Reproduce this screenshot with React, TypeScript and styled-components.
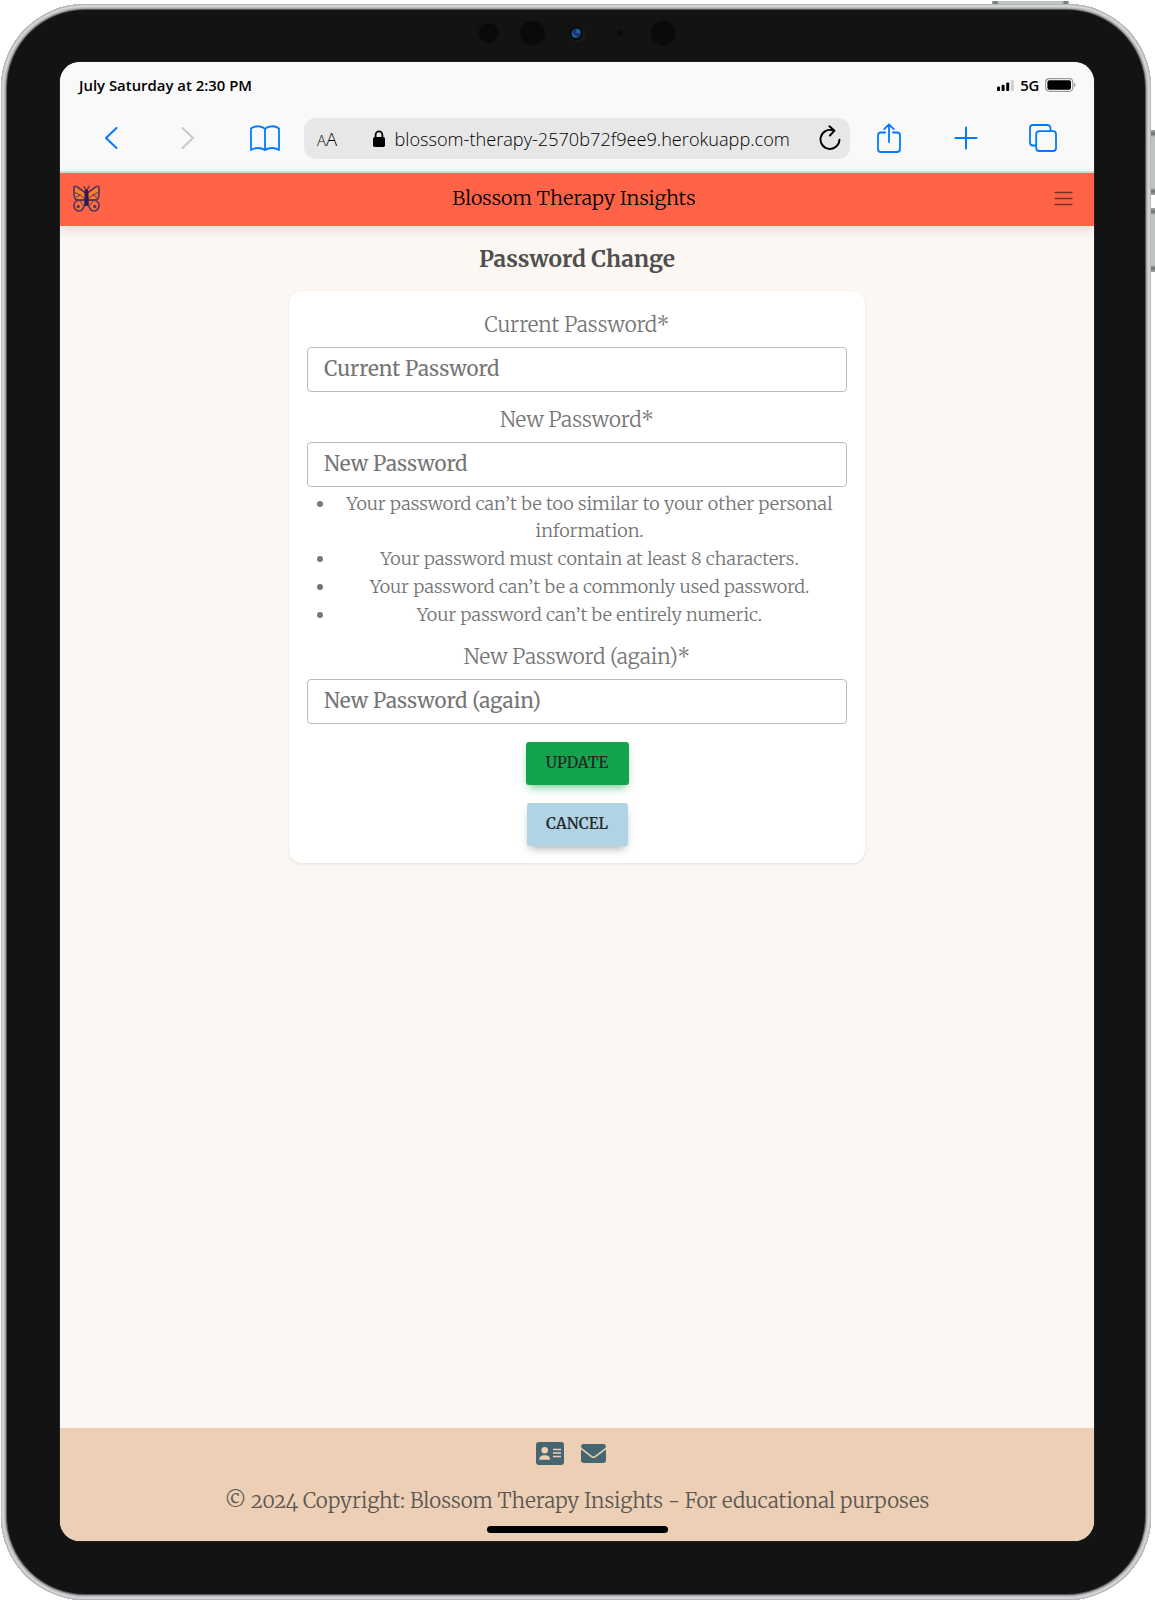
import React from "react";
import styled, { createGlobalStyle } from "styled-components";

const serif = '"Merriweather", "Noto Serif", "DejaVu Serif Condensed", "Liberation Serif", serif';
const sans = '"Open Sans", "Noto Sans", sans-serif';
const blue = "#007aff";

const GlobalStyle = createGlobalStyle`
  * { box-sizing: border-box; }
  body { margin: 0; background: #fff; overflow: hidden; }
`;

const Stage = styled.div`
  position: relative;
  width: 1155px;
  height: 1600px;
  padding: 4px 4px 0 1px;
`;

const HardwareKey = styled.i<{ $x: number; $y: number; $w: number; $h: number; $side?: boolean }>`
  position: absolute;
  left: ${(p) => p.$x}px;
  top: ${(p) => p.$y}px;
  width: ${(p) => p.$w}px;
  height: ${(p) => p.$h}px;
  background: linear-gradient(
    ${(p) => (p.$side ? "180deg" : "90deg")},
    #a4a6a6 0, #6b6e6e 4px, #bfc3c2 7px, #bfc3c2 calc(100% - 7px), #6b6e6e calc(100% - 4px), #a4a6a6 100%
  );
`;

const Frame = styled.div`
  position: relative;
  height: 1596px;
  padding: 6px;
  border-radius: 84px;
  background: #131313;
  box-shadow:
    inset 0 0 0 1px #b5b6b8,
    inset 0 0 0 3px #d3d4d6,
    inset 0 0 0 4px #bcbdc0,
    inset 0 0 0 5px #a3a3a7,
    inset 0 0 0 6px #55565a;
`;

const Bezel = styled.div`
  display: flex;
  flex-direction: column;
  height: 100%;
  padding: 0 51px 53px 53px;
`;

const CameraRow = styled.div`
  flex: 0 0 52px;
  display: flex;
  justify-content: center;
  svg { display: block; }
`;

const Screen = styled.div`
  flex: 1;
  display: flex;
  flex-direction: column;
  width: 1034px;
  border-radius: 20px;
  background: #fcf7f3;
  box-shadow: 0 0 0 1px #1c2222;
  overflow: hidden;
`;

const StatusBar = styled.div`
  display: flex;
  flex: 0 0 47px;
  align-items: center;
  justify-content: space-between;
  padding: 0 18px 1px 19px;
  background: #f9f9f9;
  font: 600 14.9px/20px ${sans};
  color: #000;
`;

const StatusIcons = styled.div`
  display: flex;
  align-items: center;
  gap: 6px;
  letter-spacing: -0.3px;
  svg { display: block; }
`;

const Toolbar = styled.div`
  display: flex;
  flex: 0 0 64px;
  align-items: center;
  padding: 0 12px 4px 12px;
  border-bottom: 2px solid #dcdcdc;
  background: #f9f9f9;
`;

const ToolGroup = styled.div`
  display: grid;
  grid-template-columns: repeat(3, 1fr);
  width: 232px;
`;

const ToolButton = styled.button`
  display: flex;
  align-items: center;
  justify-content: center;
  height: 40px;
  padding: 0;
  border: 0;
  background: none;
`;

const AddressBar = styled.div`
  display: flex;
  align-items: center;
  width: 546px;
  height: 41px;
  padding: 0 9px 0 13px;
  border-radius: 12px;
  background: #e7e7e7;
  font: 300 18.15px/40px ${sans};
  color: #000;
`;

const TextSize = styled.div`
  width: 56px;
  padding-top: 3px;
  font-size: 18.5px;
  small { font-size: 15px; }
`;

const Url = styled.div`
  flex: 1;
  padding: 1px 0 0 9.5px;
  white-space: nowrap;
`;

const NavBar = styled.header`
  position: relative;
  display: grid;
  grid-template-columns: 60px 1fr 60px;
  flex: 0 0 53px;
  align-items: center;
  padding: 0 14px 2px 13px;
  background: #ff6347;
  box-shadow: 0 4px 12px rgba(0, 0, 0, 0.11);
  svg { display: block; }
  svg:last-child { justify-self: end; margin-right: 7px; }
`;

const Brand = styled.div`
  padding: 0 5px 2px 0;
  text-align: center;
  font: 300 19.8px/30px ${serif};
  color: #000;
`;

const Main = styled.main`
  flex: 1;
  display: flex;
  flex-direction: column;
  align-items: center;
`;

const PageTitle = styled.h1`
  margin: 17px 0 16px;
  font: 700 22.6px/32px ${serif};
  color: #4f4f4f;
`;

const Card = styled.form`
  display: flex;
  flex-direction: column;
  align-items: center;
  width: 576px;
  height: 572px;
  padding: 19px 18px 0;
  border-radius: 13px;
  background: #fff;
  box-shadow: 0 1px 3px rgba(0, 0, 0, 0.1);
`;

const Label = styled.label`
  font: 300 20.7px/30px ${serif};
  color: #757575;
`;

const Input = styled.input`
  flex: 0 0 45px;
  width: 540px;
  margin: 7px 0 13px;
  padding: 0 15px 1px 16px;
  border: 1px solid #bdbdbd;
  border-radius: 4px;
  background: #fff;
  font: 400 20.6px/30px ${serif};
  &::placeholder { color: #757575; opacity: 1; }
`;

const Hints = styled.ul`
  align-self: stretch;
  margin: -10px 0 13px;
  padding: 0 0 0 25px;
  font: 300 18.1px/27.3px ${serif};
  color: #757575;
  text-align: center;
  list-style: none;
`;

const Hint = styled.li`
  position: relative;
  padding-bottom: 0.6px;
  &::before {
    content: "";
    position: absolute;
    left: -15px;
    top: 11px;
    width: 6px;
    height: 6px;
    border-radius: 50%;
    background: #757575;
  }
`;

const Button = styled.button<{ $bg: string; $shadow: string; $w: number }>`
  flex: 0 0 43px;
  width: ${(p) => p.$w}px;
  margin: 5px 0 13px;
  padding: 0;
  border: 0;
  border-radius: 3px;
  background: ${(p) => p.$bg};
  box-shadow: 0 5px 9px -3px ${(p) => p.$shadow};
  font: 600 15.2px/20px ${serif};
  color: #262626;
`;

const Footer = styled.footer`
  display: flex;
  flex-direction: column;
  align-items: center;
  flex: 0 0 113px;
  background: #eccfb4;
`;

const FooterIcons = styled.div`
  display: flex;
  align-items: center;
  gap: 17px;
  height: 51px;
  margin-right: 13px;
`;

const Copyright = styled.div`
  margin-top: 7px;
  font: 300 20.58px/30px ${serif};
  font-variant-numeric: oldstyle-nums;
  color: #5a5651;
`;

const HomeIndicator = styled.div`
  width: 181px;
  height: 7px;
  margin-top: 10px;
  border-radius: 4px;
  background: #000;
`;

const Stroke = ({ w, h, color = blue, sw = 2, children }: { w: number; h: number; color?: string; sw?: number; children: React.ReactNode }) => (
  <svg width={w} height={h} viewBox={`0 0 ${w} ${h}`} fill="none" stroke={color} strokeWidth={sw} strokeLinecap="round" strokeLinejoin="round">
    {children}
  </svg>
);

const Cameras = () => (
  <svg width="204" height="48" viewBox="0 0 204 48">
    <circle cx="13.5" cy="23" r="10" fill="#080b0a" />
    <circle cx="57.5" cy="23" r="12.5" fill="#080b0a" />
    <circle cx="102.5" cy="24" r="7.5" fill="#1c1f1e" />
    <circle cx="101.3" cy="23.2" r="7" fill="#0a0d10" />
    <circle cx="101.3" cy="23.2" r="4.8" fill="#173766" />
    <path d="M101.3 23.2V18.6a4.8 4.8 0 0 1 4.4 4.6z" fill="#2a5f98" />
    <path d="M97 21q2 5 7 6-6 2-7-2z" fill="#1f5aa5" />
    <circle cx="144.5" cy="23" r="2.5" fill="#080b0a" />
    <circle cx="188.5" cy="23" r="12.5" fill="#080b0a" />
  </svg>
);

const Butterfly = () => (
  <svg width="27" height="27" viewBox="0 0 27 27" fill="#ff7f27" stroke="#5b3468" strokeWidth="1.7" strokeLinejoin="round">
    {[undefined, "matrix(-1 0 0 1 27 0)"].map((t, i) => (
      <g key={i} transform={t}>
        <path d="M12.600 8 4 1.800C2.300 1 1 1.200 1 3c0 3 0 6 .3 8.500.4 2.300 2 3.500 4.300 3.500h7z" />
        <path d="m2 7.500 5.500 2.500 5 4.500M3 12l4.500-2" strokeWidth="1" fill="none" />
        <path d="M12 15.200H6.300C3 15.200 1 17.600 1 20.500S3.200 26 6 26c3.500 0 5-3 6-7.500z" fill="#ff7038" />
        <circle cx="5.200" cy="21.500" r="1.700" fill="#5b3468" stroke="none" />
        <path d="m7 16 3.500 4.500" strokeWidth="1" />
        <path d="M13 5 10.700.9" strokeWidth="1.100" fill="none" stroke="#3a2340" />
      </g>
    ))}
    <rect x="12.200" y="5" width="2.600" height="15.500" rx="1.300" fill="#2f1c4c" stroke="#2f1c4c" strokeWidth="1.200" />
  </svg>
);

export default function App() {
  return (
    <Stage>
      <GlobalStyle />
      <HardwareKey $x={992} $y={1} $w={77} $h={4} />
      <HardwareKey $x={1151} $y={130} $w={4} $h={65} $side />
      <HardwareKey $x={1151} $y={208} $w={4} $h={64} $side />
      <Frame>
        <Bezel>
          <CameraRow><Cameras /></CameraRow>
          <Screen>
            <StatusBar>
              <span>July Saturday at 2:30 PM</span>
              <StatusIcons>
                <svg width="17" height="11" viewBox="0 0 17 11">
                  <rect y="6.500" width="3" height="4.500" rx="1" />
                  <rect x="4.600" y="4.700" width="3" height="6.300" rx="1" />
                  <rect x="9.200" y="2.500" width="3" height="8.500" rx="1" />
                  <rect x="13.800" width="3" height="11" rx="1" fill="#cfcfcf" />
                </svg>
                <span>5G</span>
                <svg width="31" height="14" viewBox="0 0 31 14">
                  <rect x=".7" y=".7" width="27" height="12.600" rx="3.500" fill="#fff" stroke="#9a9a9a" strokeWidth="1.200" />
                  <rect x="2.400" y="2.300" width="23.600" height="9.400" rx="2" />
                  <path d="M29 5v4q1.400-.5 1.400-2T29 5z" fill="#888" />
                </svg>
              </StatusIcons>
            </StatusBar>
            <Toolbar>
              <ToolGroup>
                <ToolButton aria-label="Back"><Stroke w={14} h={24}><path d="M12.500 2 2 12l10.500 10" /></Stroke></ToolButton>
                <ToolButton aria-label="Forward"><Stroke w={14} h={24} color="#c9c9c9"><path d="m1.500 2 10.500 10-10.500 10" /></Stroke></ToolButton>
                <ToolButton aria-label="Bookmarks">
                  <Stroke w={30} h={26} sw={1.8}>
                    <path d="M15 4C12 .6 5 .3 1 3.500V25c4-2.700 10-2.700 14 0 4-2.700 10-2.700 14 0V3.500C25 .3 18 .6 15 4zV25" />
                  </Stroke>
                </ToolButton>
              </ToolGroup>
              <AddressBar>
                <TextSize><small>A</small>A</TextSize>
                <svg width="12" height="17" viewBox="0 0 12 17">
                  <path d="M2.600 8V4.800a3.400 3.400 0 0 1 6.800 0V8" fill="none" stroke="#000" strokeWidth="1.800" />
                  <rect y="7" width="12" height="10" rx="1.800" />
                </svg>
                <Url>blossom-therapy-2570b72f9ee9.herokuapp.com</Url>
                <Stroke w={22} h={26} color="#000" sw={1.9}>
                  <path d="M20.500 14.600a9.500 9.500 0 1 1-6.500-9.200M10.500 1.200l5 4.500-4.600 4.800" />
                </Stroke>
              </AddressBar>
              <ToolGroup>
                <ToolButton aria-label="Share">
                  <Stroke w={24} h={30} sw={1.8}>
                    <path d="M8 9.500H4a3 3 0 0 0-3 3V26a3 3 0 0 0 3 3h16a3 3 0 0 0 3-3V12.500a3 3 0 0 0-3-3h-4M12 19V1.500M7.200 6.200 12 1.300l4.800 4.900" />
                  </Stroke>
                </ToolButton>
                <ToolButton aria-label="New tab"><Stroke w={24} h={24}><path d="M12 1.500v21M1.500 12h21" /></Stroke></ToolButton>
                <ToolButton aria-label="Tabs">
                  <Stroke w={28} h={28} sw={1.8}>
                    <rect x="7.200" y="7.200" width="19.800" height="19.800" rx="3" />
                    <path d="M21.500 6.800V4a3 3 0 0 0-3-3H4a3 3 0 0 0-3 3v14.500a3 3 0 0 0 3 3h2.800" />
                  </Stroke>
                </ToolButton>
              </ToolGroup>
            </Toolbar>
            <NavBar>
              <Butterfly />
              <Brand>Blossom Therapy Insights</Brand>
              <Stroke w={19} h={15} color="#7b3024" sw={1.3}><path d="M1 1.500h17M1 7.500h17M1 13.500h17" /></Stroke>
            </NavBar>
            <Main>
              <PageTitle>Password Change</PageTitle>
              <Card onSubmit={(e) => e.preventDefault()}>
                <Label htmlFor="current">Current Password*</Label>
                <Input id="current" type="password" placeholder="Current Password" />
                <Label htmlFor="new1">New Password*</Label>
                <Input id="new1" type="password" placeholder="New Password" />
                <Hints>
                  <Hint>Your password can’t be too similar to your other personal information.</Hint>
                  <Hint>Your password must contain at least 8 characters.</Hint>
                  <Hint>Your password can’t be a commonly used password.</Hint>
                  <Hint>Your password can’t be entirely numeric.</Hint>
                </Hints>
                <Label htmlFor="new2">New Password (again)*</Label>
                <Input id="new2" type="password" placeholder="New Password (again)" />
                <Button $bg="#14a44d" $shadow="rgba(20, 164, 77, 0.65)" $w={103}>UPDATE</Button>
                <Button type="button" $bg="#b0d3e6" $shadow="rgba(0, 0, 0, 0.35)" $w={101}>CANCEL</Button>
              </Card>
            </Main>
            <Footer>
              <FooterIcons>
                <svg width="28" height="23" viewBox="0 0 28 23" fill="#456570">
                  <rect width="28" height="23" rx="3" />
                  <g fill="#eccfb4">
                    <circle cx="8.700" cy="8.300" r="3.300" />
                    <path d="M3.200 17.800a4.500 4.500 0 0 1 4.500-4.500h2a4.500 4.500 0 0 1 4.500 4.500z" />
                    <path d="M17 6.700h8v1.500h-8zM17 10.200h8v1.500h-8zM17 13.700h8v1.500h-8z" />
                  </g>
                </svg>
                <svg width="25" height="19" viewBox="0 0 25 19" fill="#456570">
                  <path d="M2.500 0h20A2.400 2.400 0 0 1 24 4.200l-10.600 8a1.600 1.600 0 0 1-1.900 0L1 4.200A2.400 2.400 0 0 1 2.500 0z" />
                  <path d="M0 5.400 10.600 13.400a3.200 3.200 0 0 0 3.800 0L25 5.400V16a3 3 0 0 1-3 3H3a3 3 0 0 1-3-3z" />
                </svg>
              </FooterIcons>
              <Copyright>© 2024 Copyright: Blossom Therapy Insights - For educational purposes</Copyright>
              <HomeIndicator />
            </Footer>
          </Screen>
        </Bezel>
      </Frame>
    </Stage>
  );
}
